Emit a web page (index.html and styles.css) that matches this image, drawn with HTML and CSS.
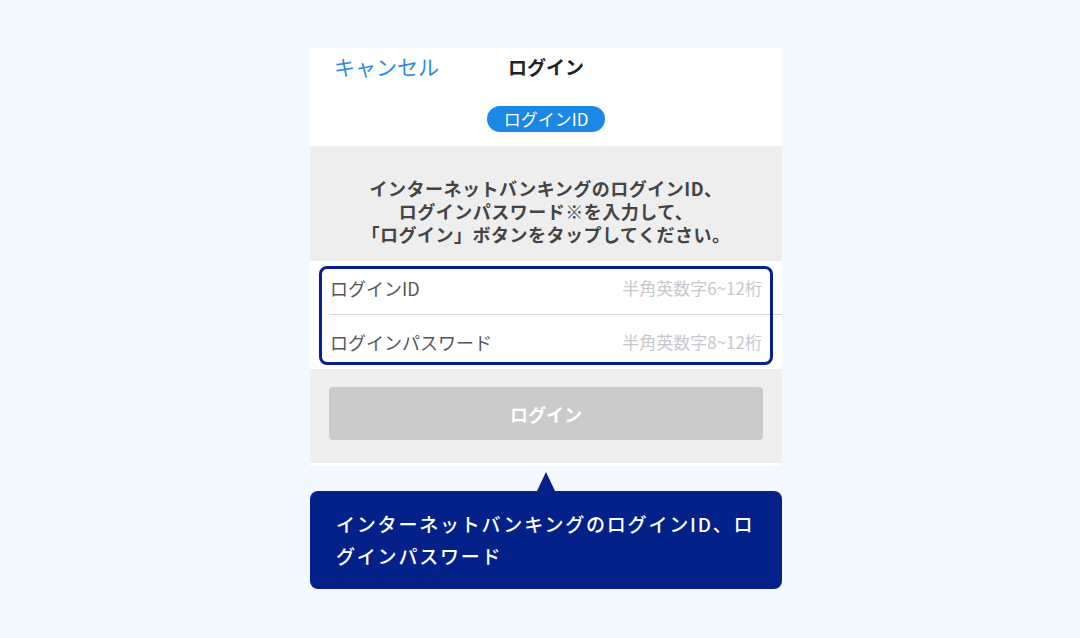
FILE: index.html
```html
<!DOCTYPE html>
<html lang="ja">
<head>
    <meta charset="UTF-8">
    <meta name="viewport" content="width=device-width, initial-scale=1.0">
    <title>ログイン</title>
    <link rel="stylesheet" href="styles.css">
</head>
<body>

<div class="screen">
    <div class="nav">
        <a href="#" class="nav-cancel">キャンセル</a>
        <span class="nav-title">ログイン</span>
        <span></span>
    </div>
    <div class="step">
        <span class="step-pill">ログインID</span>
    </div>

    <div class="intro">
        インターネットバンキングのログインID、<br>
        ログインパスワード※を入力して、<br>
        「ログイン」ボタンをタップしてください。
    </div>

    <div class="fields">
        <div class="field">
            <span class="field-label">ログインID</span>
            <span class="field-hint">半角英数字6~12桁</span>
        </div>
        <div class="field field-next">
            <span class="field-label">ログインパスワード</span>
            <span class="field-hint">半角英数字8~12桁</span>
        </div>
        <div class="highlight"></div>
    </div>

    <div class="actions">
        <button type="button" class="btn-login" disabled>ログイン</button>
    </div>
</div>

<div class="callout">
    インターネットバンキングのログインID、ログインパスワード
</div>

</body>
</html>
```

FILE: styles.css
```css
body {
    margin: 0;
    padding: 48px 0 0 310px;
    width: 1080px;
    height: 638px;
    box-sizing: border-box;
    background-color: #f3f7fe;
    font-family: "Noto Sans CJK JP", "Noto Sans", sans-serif;
    overflow: hidden;
}
.screen {
    width: 472px;
    background: white;
    padding-bottom: 3px;
}
.nav {
    display: grid;
    grid-template-columns: 1fr auto 1fr;
    align-items: center;
    height: 36px;
    padding: 0 24px;
}
.nav-cancel {
    color: #2c8be0;
    font-size: 21px;
    text-decoration: none;
}
.nav-title {
    color: #222;
    font-size: 19px;
    font-weight: bold;
}
.step {
    display: flex;
    justify-content: center;
    padding: 22px 0 14px;
}
.step-pill {
    background-color: #1a88e4;
    color: white;
    font-size: 17px;
    line-height: 26px;
    height: 26px;
    padding: 0 17px;
    border-radius: 13px;
}
.intro {
    background-color: #eeeeee;
    color: #444;
    font-size: 18px;
    font-weight: bold;
    letter-spacing: 0.5px;
    line-height: 23px;
    text-align: center;
    padding: 31px 0 15px;
}
.fields {
    position: relative;
}
.field {
    display: flex;
    justify-content: space-between;
    align-items: center;
    height: 53px;
    margin-left: 19px;
    padding: 0 20px 0 1px;
}
.field-next {
    border-top: 1px solid #d6d6d6;
    padding-bottom: 1px;
}
.field-label {
    color: #555;
    font-size: 18px;
}
.field-hint {
    color: #c8c8cc;
    font-size: 17px;
}
.highlight {
    position: absolute;
    top: 5px;
    left: 9px;
    right: 9px;
    height: 99px;
    box-sizing: border-box;
    border: 3px solid #06218c;
    border-radius: 8px;
}
.actions {
    background-color: #eeeeee;
    padding: 18px 19px 23px;
}
.btn-login {
    display: block;
    width: 100%;
    height: 53px;
    border: none;
    border-radius: 4px;
    background-color: #cbcbcb;
    color: white;
    font-family: inherit;
    font-size: 18px;
    font-weight: bold;
}
.callout {
    position: relative;
    width: 472px;
    box-sizing: border-box;
    margin-top: 25px;
    padding: 17px 20px 17px 26px;
    background-color: #04218a;
    border-radius: 8px;
    color: white;
    font-size: 19px;
    font-weight: 500;
    letter-spacing: 1.8px;
    line-height: 32px;
}
.callout::before {
    content: "";
    position: absolute;
    top: -19px;
    left: 227px;
    border-left: 9.5px solid transparent;
    border-right: 9.5px solid transparent;
    border-bottom: 19px solid #04218a;
}
```
